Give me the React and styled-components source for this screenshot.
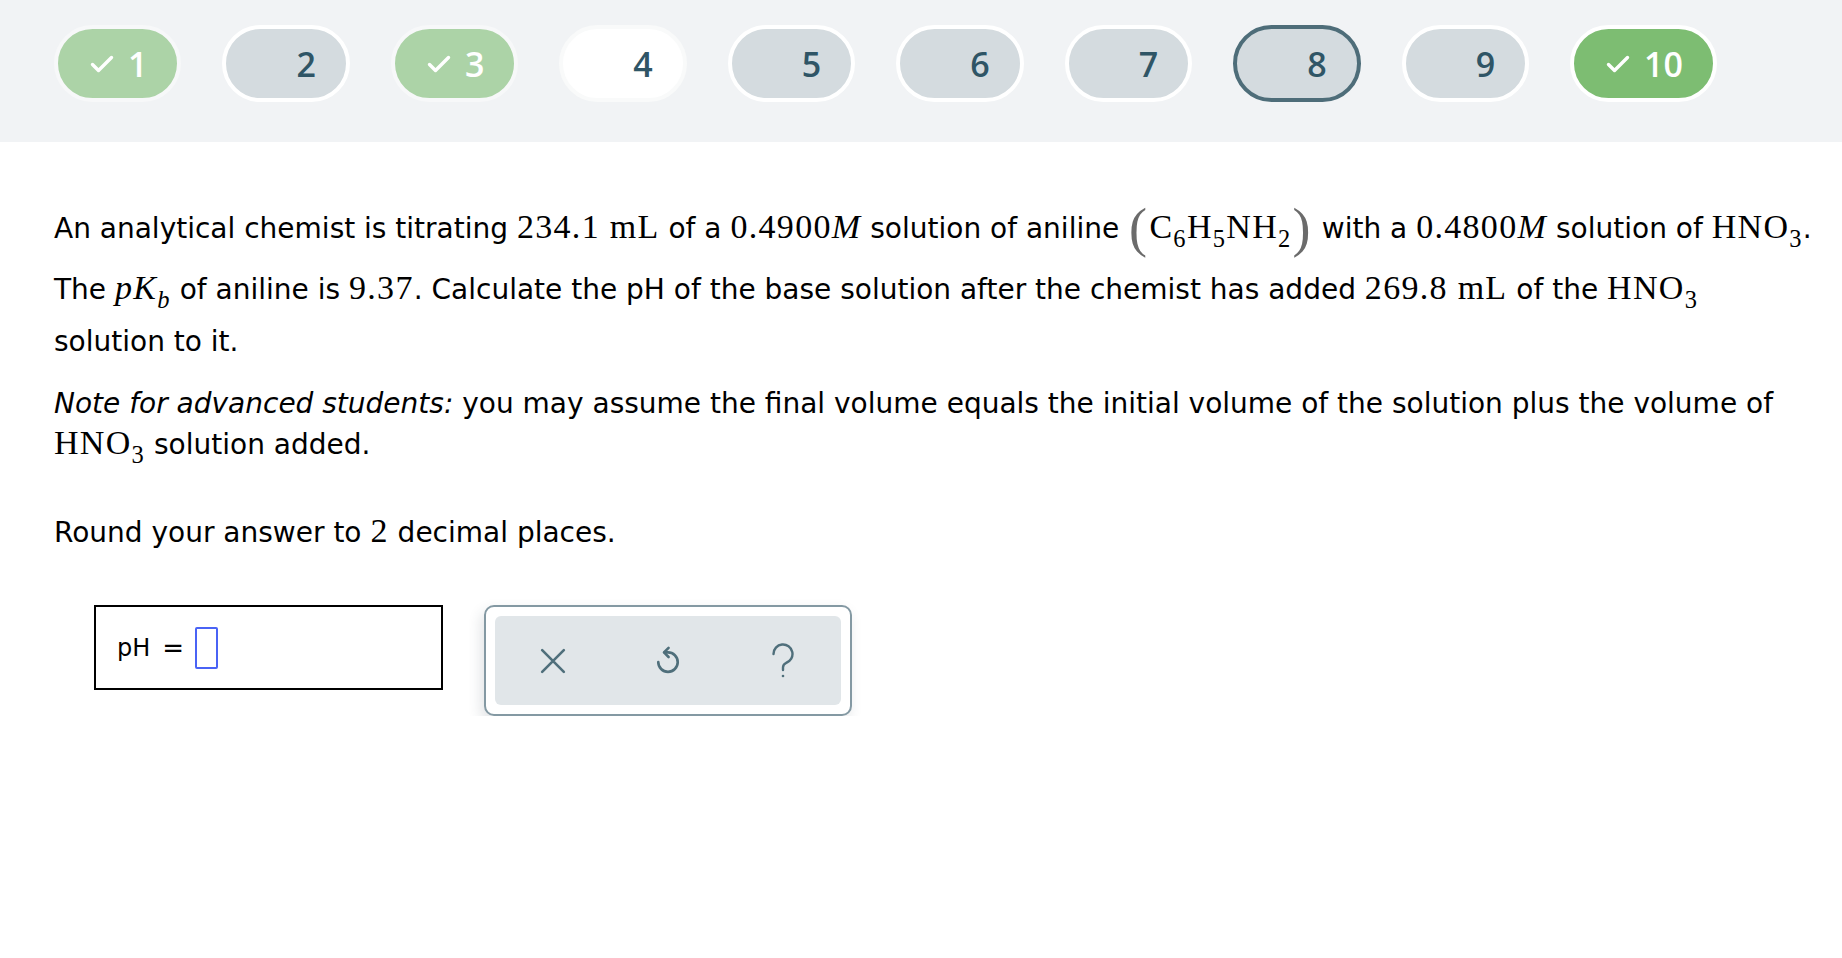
import React from "react";
import styled, { createGlobalStyle, css } from "styled-components";

const GlobalStyle = createGlobalStyle`
  html, body {
    margin: 0;
    padding: 0;
    background: #fff;
  }
  body {
    font-family: "DejaVu Sans", Verdana, sans-serif;
    color: #000;
  }
`;

const pillColors = {
  done: css`
    background: #acd3a7;
    border-color: #f7f8f9;
    color: #fff;
  `,
  last: css`
    background: #7dbd72;
    border-color: #fff;
    color: #fff;
  `,
  current: css`
    background: #fff;
    border-color: #f9fafa;
    color: #2f5566;
  `,
  open: css`
    background: #d4dbdf;
    border-color: #fff;
    color: #2f5566;
  `,
  selected: css`
    background: #d4dbdf;
    border-color: #4e6d79;
    color: #2f5566;
  `,
};

const TopBar = styled.nav`
  display: flex;
  align-items: flex-start;
  gap: 41px;
  height: 142px;
  box-sizing: border-box;
  padding: 25px 0 0 54px;
  background: #f1f3f5;
`;

const Pill = styled.button`
  display: flex;
  align-items: center;
  gap: 14px;
  height: 77px;
  box-sizing: border-box;
  padding: 0 30px 0 32px;
  border: 4px solid;
  border-radius: 40px;
  font-family: "Open Sans", sans-serif;
  font-size: 34px;
  font-weight: 600;
  line-height: 1;
  cursor: pointer;
  ${(p) => pillColors[p.$state]}
`;

const Check = styled.svg`
  width: 24px;
  height: 18px;
  visibility: ${(p) => (p.$shown ? "visible" : "hidden")};
`;

const Content = styled.main`
  padding: 50px 29px 0 54px;
`;

const Para = styled.p`
  margin: 0 0 ${(p) => p.$after || 0}px;
  font-size: 28px;
  line-height: ${(p) => p.$lh || 41}px;
`;

const Math = styled.span`
  font-family: "Liberation Serif", "Times New Roman", serif;
  font-size: 34px;
  letter-spacing: 1.3px;
  line-height: 1;
  white-space: nowrap;
`;

const Sub = styled.sub`
  font-size: 0.72em;
  vertical-align: -0.35em;
  line-height: 0;
`;

const Paren = styled.span`
  display: inline-block;
  font-size: 54px;
  line-height: 72px;
  color: #6b6b6b;
  vertical-align: -8px;
  margin: 0 1px;
`;

const Answer = styled.div`
  display: flex;
  align-items: flex-start;
  gap: 41px;
  margin: 52px 0 0 40px;
`;

const InputBox = styled.div`
  display: flex;
  align-items: center;
  width: 349px;
  height: 85px;
  box-sizing: border-box;
  padding-left: 21px;
  border: 2px solid #000;
  font-size: 24px;
`;

const Equals = styled.span`
  margin: 0 11px 0 12px;
  font-size: 26px;
`;

const Blank = styled.span`
  width: 23px;
  height: 42px;
  box-sizing: border-box;
  border: 2px solid #4a63f5;
  border-radius: 2px;
`;

const Panel = styled.div`
  width: 368px;
  height: 111px;
  box-sizing: border-box;
  padding: 9px;
  border: 2px solid #8499a3;
  border-radius: 10px;
  background: #fff;
  box-shadow: -3px 6px 14px rgba(40, 60, 70, 0.14);
`;

const Tools = styled.div`
  display: grid;
  grid-template-columns: repeat(3, 1fr);
  align-items: center;
  height: 100%;
  border-radius: 6px;
  background: #e1e6e9;
`;

const Tool = styled.button`
  display: flex;
  justify-content: center;
  align-items: center;
  height: 100%;
  padding: 0;
  border: none;
  background: none;
  color: #4f6f7b;
  cursor: pointer;
`;

const pills = [
  { n: 1, state: "done" },
  { n: 2, state: "open" },
  { n: 3, state: "done" },
  { n: 4, state: "current" },
  { n: 5, state: "open" },
  { n: 6, state: "open" },
  { n: 7, state: "open" },
  { n: 8, state: "selected" },
  { n: 9, state: "open" },
  { n: 10, state: "last" },
];

const CheckIcon = ({ shown }) => (
  <Check $shown={shown} viewBox="0 0 24 18" fill="none">
    <path
      d="M2.5 9.5 L8.5 15.5 L21.5 2.5"
      stroke="#fff"
      strokeWidth="3.4"
      strokeLinecap="round"
      strokeLinejoin="round"
    />
  </Check>
);

const HNO3 = () => (
  <Math>
    HNO<Sub>3</Sub>
  </Math>
);

export default function App() {
  return (
    <>
      <GlobalStyle />
      <TopBar>
        {pills.map((p) => (
          <Pill key={p.n} $state={p.state}>
            <CheckIcon shown={p.state === "done" || p.state === "last"} />
            <span>{p.n}</span>
          </Pill>
        ))}
      </TopBar>

      <Content>
        <Para $lh={52} $after={15}>
          An analytical chemist is titrating <Math>234.1 mL</Math> of a{" "}
          <Math>
            0.4900<i>M</i>
          </Math>{" "}
          solution of aniline{" "}
          <Math>
            <Paren>(</Paren>C<Sub>6</Sub>H<Sub>5</Sub>NH<Sub>2</Sub>
            <Paren>)</Paren>
          </Math>{" "}
          with a{" "}
          <Math>
            0.4800<i>M</i>
          </Math>{" "}
          solution of <HNO3 />. The{" "}
          <Math>
            <i>p</i>
            <i>K</i>
            <Sub>
              <i>b</i>
            </Sub>
          </Math>{" "}
          of aniline is <Math>9.37</Math>. Calculate the pH of the base solution
          after the chemist has added <Math>269.8 mL</Math> of the <HNO3 />{" "}
          solution to it.
        </Para>

        <Para $after={47}>
          <i>Note for advanced students:</i> you may assume the final volume
          equals the initial volume of the solution plus the volume of{" "}
          <HNO3 /> solution added.
        </Para>

        <Para>
          Round your answer to <Math>2</Math> decimal places.
        </Para>

        <Answer>
          <InputBox>
            pH<Equals>=</Equals>
            <Blank />
          </InputBox>
          <Panel>
            <Tools>
              <Tool aria-label="Clear">
                <svg width="26" height="26" viewBox="0 0 24 24" fill="none" stroke="currentColor" strokeWidth="2.4" strokeLinecap="round">
                  <path d="M2 2 L22 22 M22 2 L2 22" />
                </svg>
              </Tool>
              <Tool aria-label="Undo">
                <svg width="28" height="32" viewBox="0 0 24 28" fill="none" stroke="currentColor" strokeWidth="2.3" strokeLinecap="round" strokeLinejoin="round">
                  <path d="M3.5 15 a8.5 8.5 0 1 0 8.5 -8.5 H9" />
                  <path d="M12.5 2.5 L8.5 6.5 L12.5 10.5" />
                </svg>
              </Tool>
              <Tool aria-label="Help">
                <svg width="24" height="36" viewBox="0 0 24 36" fill="none" stroke="currentColor" strokeWidth="2.4" strokeLinecap="round">
                  <path d="M2.5 11 a9.5 9.5 0 1 1 12.5 9 c-2 1 -3 2.5 -3 4.5 V27" />
                  <circle cx="12" cy="33" r="1.3" fill="currentColor" stroke="none" />
                </svg>
              </Tool>
            </Tools>
          </Panel>
        </Answer>
      </Content>
    </>
  );
}
